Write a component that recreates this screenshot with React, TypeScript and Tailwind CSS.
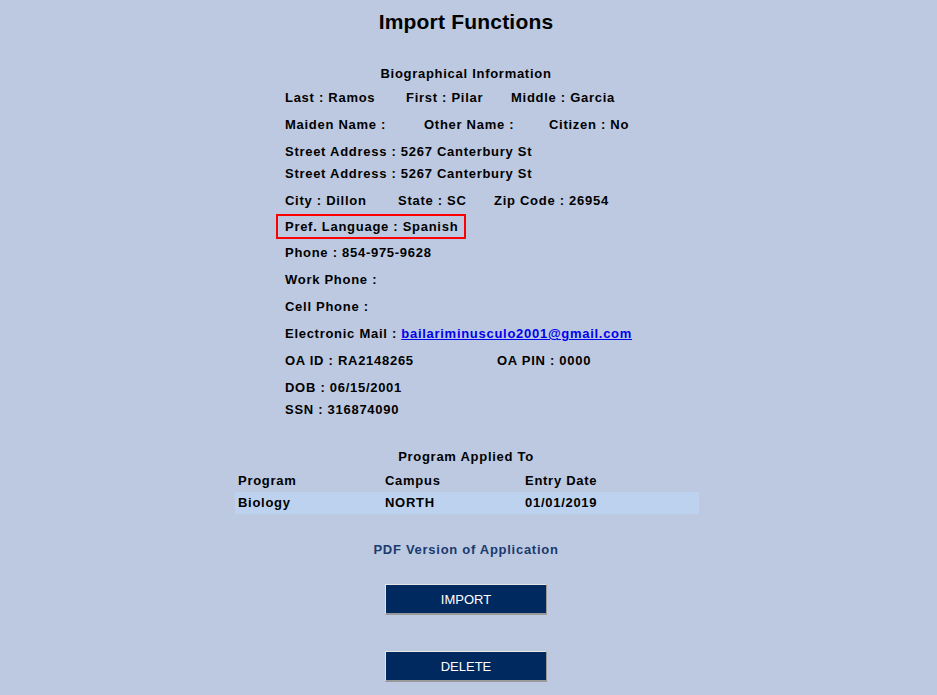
import React from "react";

const row = "h-[22px] flex items-center whitespace-nowrap";

export default function App() {
  return (
    <div
      className="min-h-[695px] w-full bg-[#bcc9e1] text-black font-bold text-[13px] tracking-[0.72px]"
      style={{ fontFamily: '"Liberation Sans", Arial, sans-serif' }}
    >
      <div className="w-[932px] pt-[7px]">
        <div className="h-[30px] flex items-center justify-center text-[21px] tracking-[0.2px]">Import Functions</div>

        <div className="mt-[26px] h-[22px] flex items-center justify-center">Biographical Information</div>

        <div className="ml-[285px]">
          <div className={`${row} mt-[2px]`}>
            <span className="w-[121px]">Last : Ramos</span>
            <span className="w-[105px]">First : Pilar</span>
            <span>Middle : Garcia</span>
          </div>
          <div className={`${row} mt-[5px]`}>
            <span className="w-[139px]">Maiden Name :</span>
            <span className="w-[125px]">Other Name :</span>
            <span>Citizen : No</span>
          </div>
          <div className={`${row} mt-[5px]`}>Street Address : 5267 Canterbury St</div>
          <div className={row}>Street Address : 5267 Canterbury St</div>
          <div className={`${row} mt-[5px]`}>
            <span className="w-[113px]">City : Dillon</span>
            <span className="w-[96px]">State : SC</span>
            <span>Zip Code : 26954</span>
          </div>
          <div className="mt-[2px] h-[25px] flex">
            <div className="-ml-[9px] h-[25px] border-2 border-[#ff0000] pl-[7px] pr-[6px] flex items-center whitespace-nowrap">
              Pref. Language : Spanish
            </div>
          </div>
          <div className={`${row} mt-[3px]`}>Phone : 854-975-9628</div>
          <div className={`${row} mt-[5px]`}>Work Phone :</div>
          <div className={`${row} mt-[5px]`}>Cell Phone :</div>
          <div className={`${row} mt-[5px]`}>
            <span>Electronic Mail :&nbsp;</span>
            <a href="#" className="text-[#0000ee] underline">bailariminusculo2001@gmail.com</a>
          </div>
          <div className={`${row} mt-[5px]`}>
            <span className="w-[212px]">OA ID : RA2148265</span>
            <span>OA PIN : 0000</span>
          </div>
          <div className={`${row} mt-[5px]`}>DOB : 06/15/2001</div>
          <div className={row}>SSN : 316874090</div>
        </div>

        <div className="mt-[25px] h-[22px] flex items-center justify-center">Program Applied To</div>

        <div className="ml-[235px] w-[464px] mt-[2px]">
          <div className="h-[22px] grid grid-cols-[147px_140px_1fr] items-center">
            <span className="pl-[3px]">Program</span>
            <span className="pl-[3px]">Campus</span>
            <span className="pl-[3px]">Entry Date</span>
          </div>
          <div className="h-[22px] grid grid-cols-[147px_140px_1fr] items-center bg-[#bdd2ee]">
            <span className="pl-[3px]">Biology</span>
            <span className="pl-[3px]">NORTH</span>
            <span className="pl-[3px]">01/01/2019</span>
          </div>
        </div>

        <div className="mt-[25px] h-[22px] flex items-center justify-center text-[#1b3a6d]">PDF Version of Application</div>

        <div className="mt-[23px] flex justify-center">
          <button className="w-[162px] h-[31px] pt-[2px] bg-[#002a5f] text-white font-normal text-[13px] tracking-normal border border-t-[#e6e6e6] border-l-[#e6e6e6] border-r-[#999999] border-b-[#999999] border-b-2">
            IMPORT
          </button>
        </div>
        <div className="mt-[36px] flex justify-center">
          <button className="w-[162px] h-[31px] pt-[2px] bg-[#002a5f] text-white font-normal text-[13px] tracking-normal border border-t-[#e6e6e6] border-l-[#e6e6e6] border-r-[#999999] border-b-[#999999] border-b-2">
            DELETE
          </button>
        </div>
      </div>
    </div>
  );
}
